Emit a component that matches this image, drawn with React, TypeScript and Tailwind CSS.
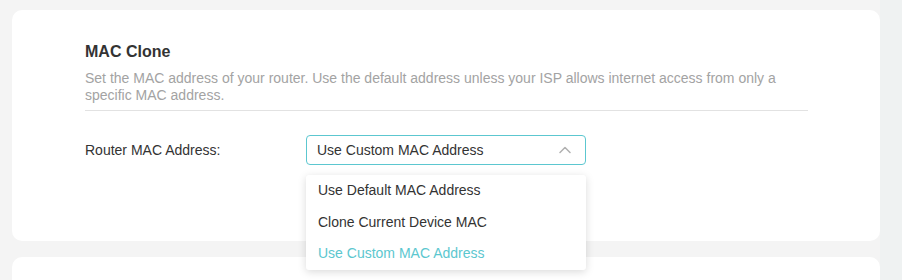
import React from "react";

export default function App() {
  const font = { fontFamily: '"Liberation Sans", Arial, sans-serif' };
  return (
    <div className="w-[902px] h-[280px] flex overflow-hidden bg-[#f4f4f4]" style={font}>
      <div className="w-[880px] flex flex-col gap-[16px] pl-[12px] pt-[10px]">
        <div className="h-[231px] shrink-0 bg-white rounded-[10px] pl-[73px] pr-[72px] pt-[30px]">
          <div className="text-[16px] font-bold leading-[24px] text-[#333333]">MAC Clone</div>
          <div className="mt-[6px] text-[14px] leading-[17px] text-[#a3a3a3] pr-[2px]">
            Set the MAC address of your router. Use the default address unless your ISP allows internet access from only a specific MAC address.
          </div>
          <div className="mt-[6px] h-px bg-[#e2e2e2]" />
          <div className="mt-[24px] flex items-center">
            <div className="w-[221px] text-[14px] text-[#333333]">Router MAC Address:</div>
            <div className="relative">
              <div className="w-[280px] h-[30px] border border-[#5cc7d0] rounded-[4px] flex items-center justify-between pl-[10px] pr-[14px] text-[14px] text-[#333333]">
                <span>Use Custom MAC Address</span>
                <svg width="12" height="8" viewBox="0 0 12 8" fill="none">
                  <polyline points="1,6.5 6,1.5 11,6.5" stroke="#b0b0b0" strokeWidth="1.5" strokeLinecap="round" strokeLinejoin="round" />
                </svg>
              </div>
              <div className="absolute left-0 top-[40px] w-[280px] bg-white rounded-[3px] shadow-[0_2px_8px_rgba(0,0,0,0.15)] text-[14px] z-10">
                <div className="h-[31.5px] flex items-center pl-[12px] text-[#333333]">Use Default MAC Address</div>
                <div className="h-[31.5px] flex items-center pl-[12px] text-[#333333]">Clone Current Device MAC</div>
                <div className="h-[31.5px] flex items-center pl-[12px] text-[#5cc7cf]">Use Custom MAC Address</div>
              </div>
            </div>
          </div>
        </div>
        <div className="h-[40px] shrink-0 bg-white rounded-t-[10px]" />
      </div>
      <div className="w-[22px] bg-[#eff2f2]" />
    </div>
  );
}
